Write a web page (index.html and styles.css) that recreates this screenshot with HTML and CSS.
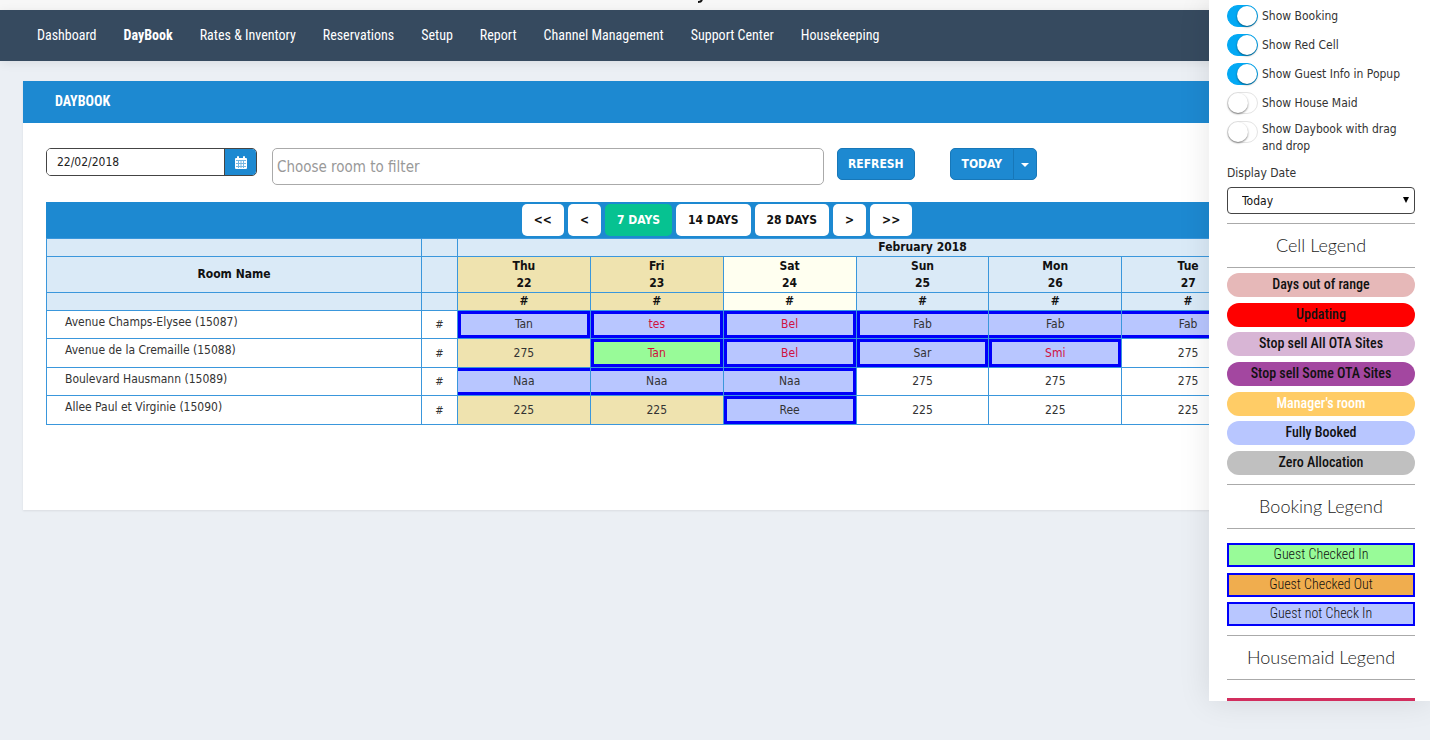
FILE: index.html
```html
<!DOCTYPE html>
<html lang="en">
<head>
    <title>DayBook</title>
    <meta charset="UTF-8">
    <link rel="stylesheet" href="styles.css">
</head>
<body>
    <header class="topbar">
        <svg width="10" height="3" viewBox="0 0 10 3"><path d="M2 2 Q5 2 6 0" fill="none" stroke="#111" stroke-width="2"/></svg>
    </header>

    <nav class="main-nav">
        <a href="#">Dashboard</a>
        <a href="#" class="active">DayBook</a>
        <a href="#">Rates &amp; Inventory</a>
        <a href="#">Reservations</a>
        <a href="#">Setup</a>
        <a href="#">Report</a>
        <a href="#">Channel Management</a>
        <a href="#">Support Center</a>
        <a href="#">Housekeeping</a>
    </nav>

    <main class="card">
        <h1 class="card-title">DAYBOOK</h1>
        <div class="card-body">
            <form class="filters">
                <div class="date-group">
                    <input type="text" class="date-input" value="22/02/2018" aria-label="Date">
                    <button type="button" class="date-btn" aria-label="Open calendar">
                        <svg width="12" height="13" viewBox="0 0 12 13">
                            <path fill="#fff" d="M1 2h1V1q0-1 1-1t1 1v1h4V1q0-1 1-1t1 1v1h1q1 0 1 1v9q0 1-1 1H1q-1 0-1-1V3q0-1 1-1z"/>
                            <path stroke="#1d89d1" stroke-width="1" d="M1 4.500h10M1 7.500h10M1 10.500h10M3.500 5v7M6 5v7M8.500 5v7" opacity=".6"/>
                        </svg>
                    </button>
                </div>
                <input type="text" class="room-filter" placeholder="Choose room to filter" aria-label="Choose room to filter">
                <button type="button" class="btn">REFRESH</button>
                <div class="btn-group">
                    <button type="button" class="btn">TODAY</button>
                    <button type="button" class="btn btn-caret" aria-label="More"><span class="caret"></span></button>
                </div>
            </form>

            <div class="range-bar">
                <button type="button">&lt;&lt;</button>
                <button type="button">&lt;</button>
                <button type="button" class="on">7 DAYS</button>
                <button type="button">14 DAYS</button>
                <button type="button">28 DAYS</button>
                <button type="button">&gt;</button>
                <button type="button">&gt;&gt;</button>
            </div>

            <table class="daybook">
                <colgroup>
                    <col class="col-room">
                    <col class="col-num">
                    <col span="7">
                </colgroup>
                <thead>
                    <tr><th></th><th></th><th colspan="7">February 2018</th></tr>
                    <tr class="days">
                        <th>Room Name</th><th></th>
                        <th class="past">Thu<br>22</th>
                        <th class="past">Fri<br>23</th>
                        <th class="today">Sat<br>24</th>
                        <th>Sun<br>25</th>
                        <th>Mon<br>26</th>
                        <th>Tue<br>27</th>
                        <th></th>
                    </tr>
                    <tr>
                        <th></th><th></th>
                        <th class="past">#</th>
                        <th class="past">#</th>
                        <th class="today">#</th>
                        <th>#</th><th>#</th><th>#</th><th></th>
                    </tr>
                </thead>
                <tbody>
                    <tr>
                        <td class="room">Avenue Champs-Elysee (15087)</td><td class="num">#</td>
                        <td class="bk single">Tan</td>
                        <td class="bk single red">tes</td>
                        <td class="bk single red">Bel</td>
                        <td class="bk start">Fab</td>
                        <td class="bk">Fab</td>
                        <td class="bk">Fab</td>
                        <td class="bk end"></td>
                    </tr>
                    <tr>
                        <td class="room">Avenue de la Cremaille (15088)</td><td class="num">#</td>
                        <td class="past">275</td>
                        <td class="bk single in red">Tan</td>
                        <td class="bk single red">Bel</td>
                        <td class="bk single">Sar</td>
                        <td class="bk single red">Smi</td>
                        <td>275</td>
                        <td></td>
                    </tr>
                    <tr>
                        <td class="room">Boulevard Hausmann (15089)</td><td class="num">#</td>
                        <td class="bk">Naa</td>
                        <td class="bk">Naa</td>
                        <td class="bk end">Naa</td>
                        <td>275</td><td>275</td><td>275</td><td></td>
                    </tr>
                    <tr>
                        <td class="room">Allee Paul et Virginie (15090)</td><td class="num">#</td>
                        <td class="past">225</td>
                        <td class="past">225</td>
                        <td class="bk single">Ree</td>
                        <td>225</td><td>225</td><td>225</td><td></td>
                    </tr>
                </tbody>
            </table>
        </div>
    </main>

    <aside class="side-panel">
        <label class="switch"><input type="checkbox" checked> Show Booking</label>
        <label class="switch"><input type="checkbox" checked> Show Red Cell</label>
        <label class="switch"><input type="checkbox" checked> Show Guest Info in Popup</label>
        <label class="switch"><input type="checkbox"> Show House Maid</label>
        <label class="switch long"><input type="checkbox"> Show Daybook with drag and drop</label>

        <label for="displayDate" class="field-label">Display Date</label>
        <div class="select-wrap">
            <select id="displayDate">
                <option>Today</option>
            </select>
        </div>

        <h2>Cell Legend</h2>
        <ul class="legend">
            <li class="range">Days out of range</li>
            <li class="updating">Updating</li>
            <li class="stop-all">Stop sell All OTA Sites</li>
            <li class="stop-some">Stop sell Some OTA Sites</li>
            <li class="manager">Manager's room</li>
            <li class="full">Fully Booked</li>
            <li class="zero">Zero Allocation</li>
        </ul>

        <h2>Booking Legend</h2>
        <ul class="legend booking">
            <li class="checked-in">Guest Checked In</li>
            <li class="checked-out">Guest Checked Out</li>
            <li class="full">Guest not Check In</li>
        </ul>

        <h2>Housemaid Legend</h2>
        <div class="maid-line"></div>
    </aside>
</body>
</html>
```
FILE: styles.css
```css
* {
    box-sizing: border-box;
}
body {
    margin: 0;
    min-height: 100vh;
    position: relative;
    background-color: #ebeff4;
    font-family: "DejaVu Sans Condensed", "Noto Sans", sans-serif;
    font-size: 12px;
    color: #333;
    overflow: hidden;
}
button, input, select {
    font-family: inherit;
    font-size: 12px;
}

/* header */
.topbar {
    height: 10px;
    background-color: #f7f7f7;
    padding-right: 28px;
    display: flex;
    justify-content: center;
    align-items: flex-start;
}
.main-nav {
    height: 51px;
    padding: 0 37px 2px;
    display: flex;
    align-items: center;
    gap: 27px;
    background-color: #364a5f;
    box-shadow: 0 2px 10px rgba(0,0,0,0.08);
}
.main-nav a {
    font-family: "Roboto Condensed", Roboto, sans-serif;
    font-size: 14px;
    color: #fff;
    text-decoration: none;
    white-space: nowrap;
}
.main-nav .active {
    font-weight: bold;
}

/* card */
.card {
    margin: 20px 19px 0 23px;
    min-height: 429px;
    background-color: #fff;
    box-shadow: 0 1px 2px rgba(0,0,0,0.08);
}
.card-title {
    margin: 0;
    padding: 0 32px;
    font: bold 14px/40px "Roboto Condensed", Roboto, sans-serif;
    height: 42px;
    color: #fff;
    background-color: #1d89d1;
}
.card-body {
    padding: 25px 23px;
}
.filters {
    display: flex;
    align-items: flex-start;
    height: 54px;
}
.date-group {
    display: flex;
    width: 211px;
    height: 28px;
    border: 1px solid #444;
    border-radius: 5px;
    overflow: hidden;
}
.date-input {
    flex: 1;
    min-width: 0;
    padding: 0 10px;
    border: 0;
    color: #222;
}
.date-btn {
    width: 32px;
    padding: 0;
    border: 0;
    border-left: 1px solid #444;
    background-color: #1d89d1;
    display: flex;
    align-items: center;
    justify-content: center;
}
.room-filter {
    width: 552px;
    height: 37px;
    margin: 0 13px 0 15px;
    padding: 0 4px;
    border: 1px solid #aaa;
    border-radius: 5px;
    font-size: 15px;
}
.room-filter::placeholder {
    color: #999;
}
.btn {
    height: 32px;
    padding: 0 10px;
    border: 1px solid #1777b8;
    border-radius: 5px;
    background-color: #1d89d1;
    color: #fff;
    font-weight: bold;
}
.btn-group {
    display: flex;
    margin-left: 35px;
}
.btn-group .btn:first-child {
    padding: 0 11px;
    border-radius: 5px 0 0 5px;
}
.btn-group .btn-caret {
    width: 24px;
    padding: 0;
    margin-left: -1px;
    border-radius: 0 5px 5px 0;
}
.caret {
    display: inline-block;
    vertical-align: middle;
    border-top: 4px solid #fff;
    border-left: 4px solid transparent;
    border-right: 4px solid transparent;
}

/* day range */
.range-bar {
    display: flex;
    justify-content: center;
    align-items: center;
    gap: 4px;
    height: 36px;
    background-color: #1d89d1;
}
.range-bar button {
    height: 32px;
    padding: 0 12px;
    border: 0;
    border-radius: 5px;
    background-color: #fff;
    color: #111;
    font-weight: bold;
}
.range-bar .on {
    background-color: #06c291;
    color: #fff;
}

/* table */
.daybook {
    width: 100%;
    table-layout: fixed;
    border-collapse: collapse;
}
.col-room {
    width: 375px;
}
.col-num {
    width: 36px;
}
.daybook th, .daybook td {
    padding: 0;
    height: 18px;
    line-height: 17px;
    border: 1px solid #3a97dc;
    text-align: center;
}
.daybook th {
    background-color: #daeaf7;
    color: #111;
}
.daybook .days th {
    height: 36px;
}
.daybook td {
    height: 28px;
}
.daybook tr:nth-child(even) td {
    height: 29px;
}
.daybook .past {
    background-color: #efe3af;
}
.daybook .today {
    background-color: #fffff0;
}
.daybook .room {
    padding: 0 18px 5px;
    text-align: left;
}
.daybook .num {
    font-size: 11px;
}
.bk {
    background-color: #b8c6ff;
    box-shadow: inset 0 3px #0000fa, inset 0 -3px #0000fa;
}
.bk.start {
    box-shadow: inset 0 3px #0000fa, inset 0 -3px #0000fa, inset 3px 0 #0000fa;
}
.bk.end {
    box-shadow: inset 0 3px #0000fa, inset 0 -3px #0000fa, inset -3px 0 #0000fa;
}
.bk.single {
    box-shadow: inset 0 0 0 3px #0000fa;
}
.bk.in {
    background-color: #98fb98;
}
.bk.red {
    color: #d0103f;
}

/* settings panel over the page */
.side-panel {
    position: absolute;
    top: 0;
    right: 0;
    width: 221px;
    padding: 5px 15px 0 18px;
    background-color: #fff;
    box-shadow: 0 0 30px rgba(0,0,0,0.1);
}
.switch {
    display: flex;
    align-items: center;
    gap: 4px;
    margin-bottom: 7px;
    min-height: 22px;
    line-height: 17px;
}
.switch.long {
    align-items: flex-start;
}
.switch input {
    appearance: none;
    flex: none;
    width: 31px;
    height: 22px;
    margin: 0;
    border: 1px solid #e4e4e4;
    border-radius: 11px;
    background-color: #fff;
}
.switch input::before {
    content: "";
    display: block;
    width: 20px;
    height: 20px;
    border-radius: 50%;
    background-color: #fff;
    box-shadow: 0 1px 2px rgba(0,0,0,0.5);
}
.switch input:checked {
    border-color: #03a9f4;
    background-color: #03a9f4;
}
.switch input:checked::before {
    margin-left: auto;
}
.field-label {
    display: block;
    margin-top: 10px;
    line-height: 17px;
}
.select-wrap {
    position: relative;
    margin: 5px 0 9px;
}
.select-wrap::after {
    content: "";
    position: absolute;
    right: 6px;
    top: 10px;
    border-top: 6px solid #000;
    border-left: 3px solid transparent;
    border-right: 3px solid transparent;
}
.side-panel select {
    appearance: none;
    display: block;
    width: 100%;
    height: 27px;
    padding: 0 14px;
    border: 1px solid #444;
    border-radius: 4px;
    background-color: #fff;
    color: #111;
}
.side-panel h2 {
    margin: 0;
    border-top: 1px solid #aaa;
    border-bottom: 1px solid #aaa;
    font: 300 18px/43px Lato, sans-serif;
    color: #222;
    text-align: center;
}
.legend {
    list-style: none;
    margin: 0;
    padding: 5px 0 9px;
    height: 216px;
    display: flex;
    flex-direction: column;
    justify-content: space-between;
}
.legend li {
    height: 24px;
    border-radius: 12px;
    font: 500 14px/23px "Roboto Condensed", Roboto, sans-serif;
    color: #111;
    text-align: center;
}
.legend .range { background-color: #e6b8b8; }
.legend .updating { background-color: #ff0000; }
.legend .stop-all { background-color: #d8b5d5; }
.legend .stop-some { background-color: #a347a0; }
.legend .manager { background-color: #ffcc66; color: #fff; }
.legend .full { background-color: #b8c6ff; }
.legend .zero { background-color: #c0c0c0; }
.legend .checked-in { background-color: #98fb98; }
.legend .checked-out { background-color: #f0ad4e; }
.legend.booking {
    padding-top: 14px;
    height: 106px;
}
.booking li {
    border: 2px solid #0000fa;
    border-radius: 0;
    font-weight: 300;
    line-height: 19px;
}
.maid-line {
    height: 3px;
    margin-top: 18px;
    background-color: #d22e5e;
}
```
